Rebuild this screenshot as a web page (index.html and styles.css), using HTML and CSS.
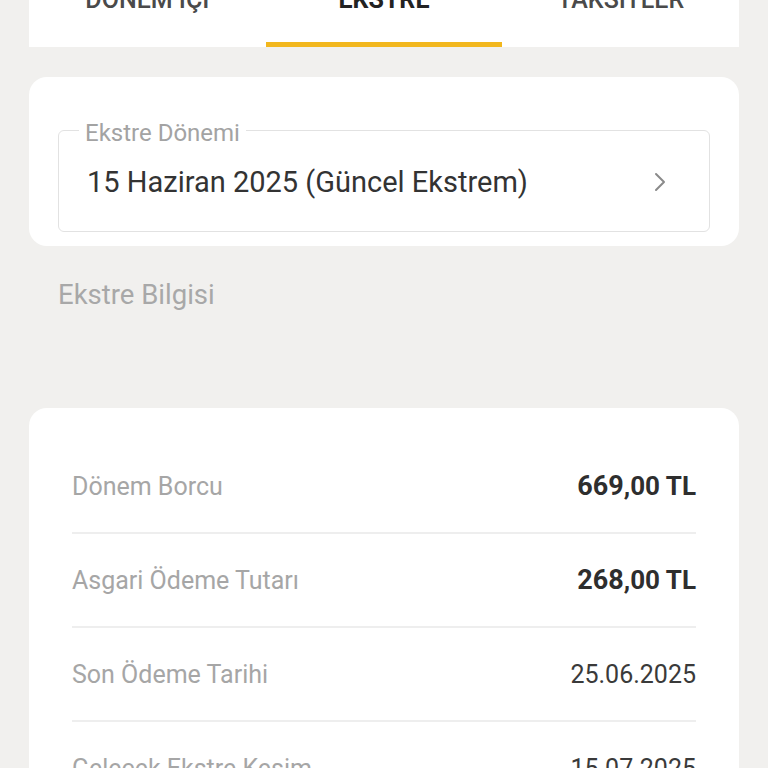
FILE: index.html
```html
<!doctype html>
<html lang="tr">
<head>
  <meta charset="utf-8">
  <title>Ekstre</title>
  <meta name="viewport" content="width=device-width,initial-scale=1">
  <link rel="stylesheet" href="styles.css">
</head>
<body>
  <main class="page">

    <!-- Tabs -->
    <nav class="tabs">
      <a class="tab">DÖNEM İÇİ</a>
      <a class="tab active">EKSTRE</a>
      <a class="tab">TAKSİTLER</a>
    </nav>

    <!-- Period picker -->
    <section class="card period">
      <fieldset class="field">
        <legend>Ekstre Dönemi</legend>
        <div class="field-value">
          <span>15 Haziran 2025 (Güncel Ekstrem)</span>
          <svg class="chev" viewBox="0 0 12 20" width="12" height="20" aria-hidden="true">
            <path d="M2 2l8 8-8 8" fill="none" stroke="#8a8a8a" stroke-width="2" stroke-linecap="round" stroke-linejoin="round"/>
          </svg>
        </div>
      </fieldset>
    </section>

    <h2 class="section-title">Ekstre Bilgisi</h2>

    <!-- Statement info -->
    <section class="card info">
      <div class="row">
        <span class="label">Dönem Borcu</span>
        <span class="value strong">669<small>,00 TL</small></span>
      </div>
      <div class="row">
        <span class="label">Asgari Ödeme Tutarı</span>
        <span class="value strong">268<small>,00 TL</small></span>
      </div>
      <div class="row">
        <span class="label">Son Ödeme Tarihi</span>
        <span class="value">25.06.2025</span>
      </div>
      <div class="row">
        <span class="label">Gelecek Ekstre Kesim</span>
        <span class="value">15.07.2025</span>
      </div>
    </section>

  </main>
</body>
</html>
```

FILE: styles.css
```css
/* ---------- Base ---------- */
*,*::before,*::after{box-sizing:border-box}
html,body{height:100%}
body{margin:0;overflow:hidden;
     background:#f1f0ee;
     font-family:Roboto,"Noto Sans",Arial,sans-serif;
     color:#333}

.page{padding:0 29px;display:flex;flex-direction:column}

/* ---------- Tabs ---------- */
.tabs{display:grid;grid-template-columns:repeat(3,1fr);
      background:#fff;margin-top:-15px}
.tab{display:block;text-align:center;
     font-size:25px;line-height:30px;font-weight:500;
     color:#4a4a4a;
     padding-bottom:27px;border-bottom:5px solid transparent}
.tab.active{color:#222;font-weight:700;border-bottom-color:#f2b71d}

/* ---------- Cards ---------- */
.card{background:#fff;border-radius:18px}

.period{margin-top:30px;padding:37px 29px 14px}
.field{margin:0;border:1px solid #e2e2e2;border-radius:6px;
       padding:0 43px 0 28px}
.field legend{margin-left:-8px;padding:6px 6px 0;
              font-size:24px;line-height:26px;color:#a3a3a3}
.field-value{display:flex;align-items:center;justify-content:space-between;
             height:85px;padding-bottom:14px;
             font-size:29px;color:#333}

.section-title{margin:34px 0 0 29px;
               font-size:27.5px;font-weight:400;line-height:30px;color:#a8a8a8}

.info{margin-top:98px;padding:32px 43px 0}
.row{display:flex;align-items:center;justify-content:space-between;
     height:94px;border-bottom:2px solid #eeeeee}
.label{font-size:25px;color:#a6a6a6}
.value{font-size:25px;color:#3a3a3a}
.value.strong{font-size:27px;font-weight:700;color:#2e2e2e}
.value small{font-size:26px}
```
